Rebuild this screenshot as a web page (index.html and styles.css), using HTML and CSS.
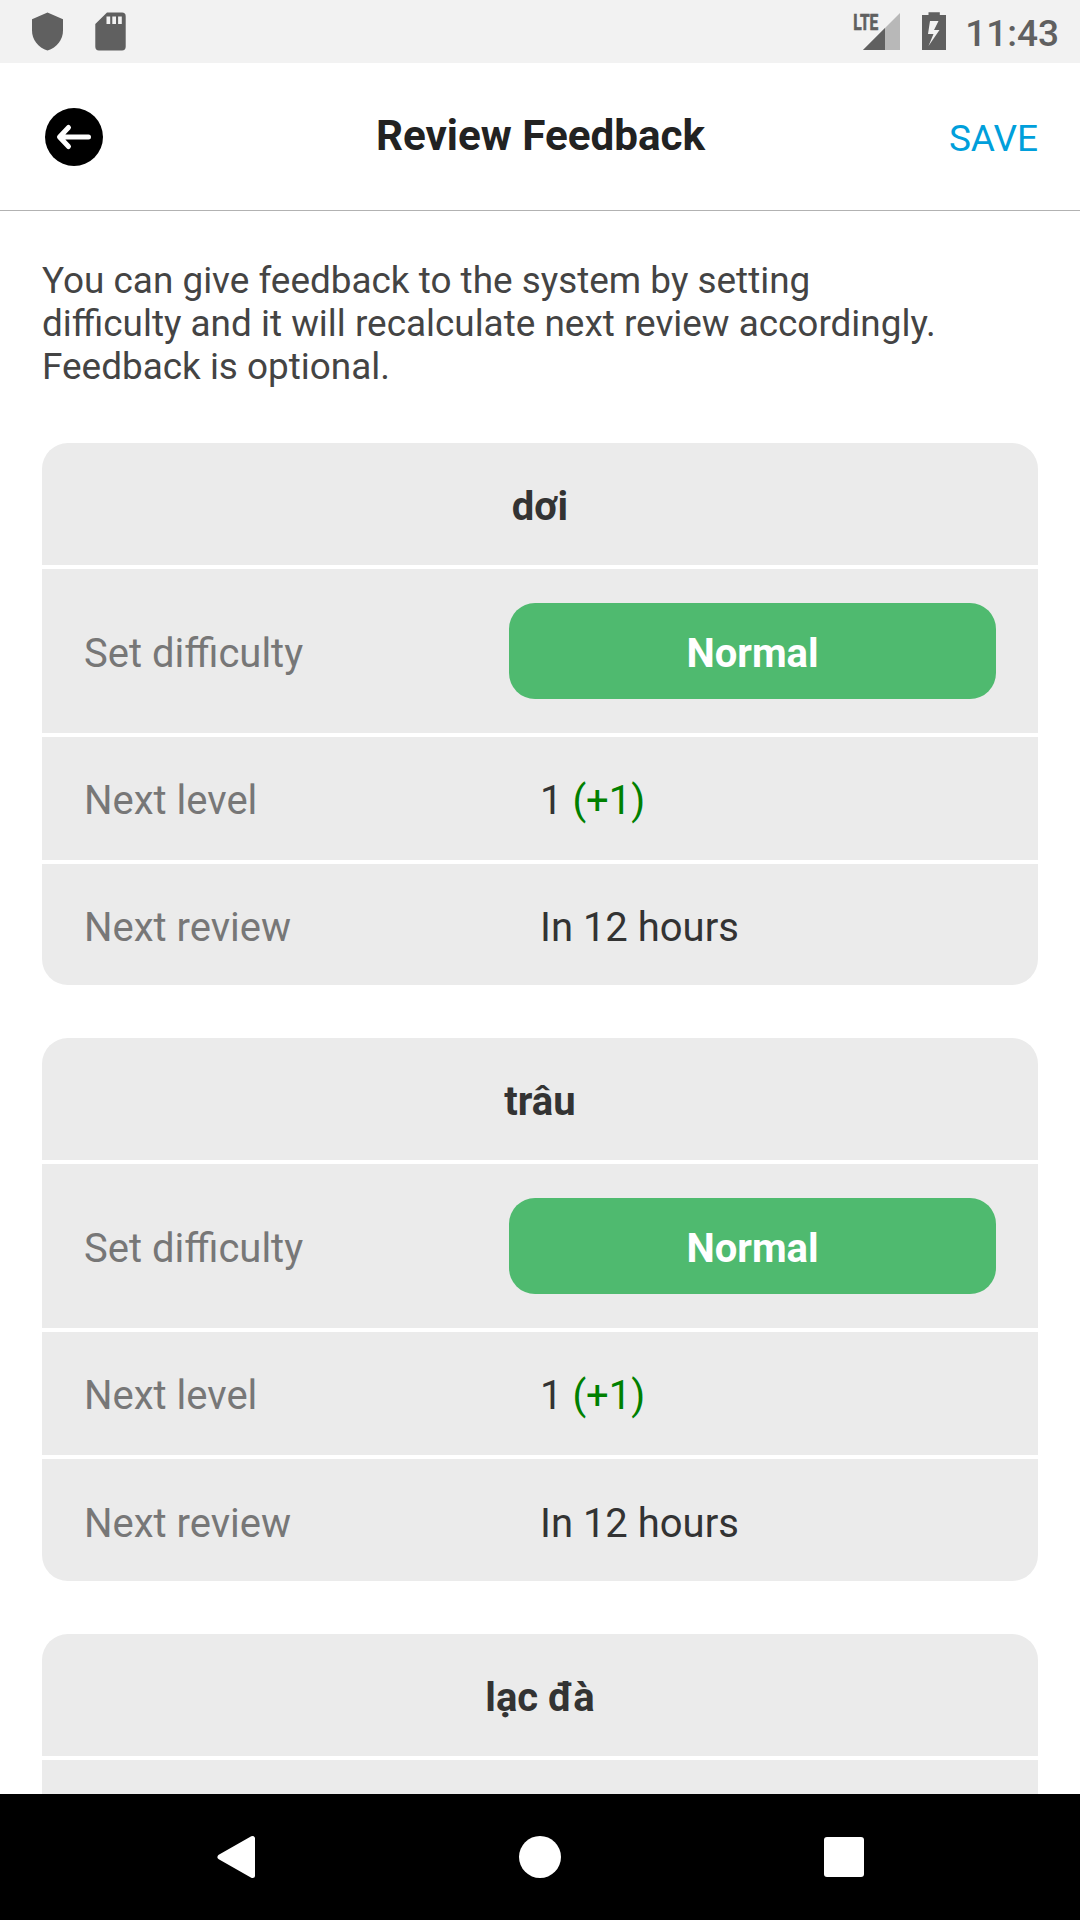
FILE: index.html
```html
<!DOCTYPE html>
<html lang="en">
<head>
<meta charset="utf-8">
<title>Review Feedback</title>
<link rel="stylesheet" href="styles.css">
</head>
<body>
<div class="screen">
  <div class="status-bar">
    <svg class="status-icons" width="180" height="63" viewBox="0 0 180 63">
      <path fill="#606060" d="M47.500 12.500L63 19.300V30.500C63 39.500 57 47.500 47.500 50.500C38 47.500 32 39.500 32 30.500V19.300Z"/>
      <path fill="#606060" fill-rule="evenodd" d="M107 12.500H122Q125.700 12.500 125.700 16.200V46.700Q125.700 50.400 122 50.400H99Q95.300 50.400 95.300 46.700V24ZM106.500 16.500V24H110.200V16.500ZM112.300 16.500V24H116V16.500ZM118.100 16.500V24H121.800V16.500Z"/>
    </svg>
    <svg class="status-icons" width="110" height="63" viewBox="850 0 110 63">
      <path fill="#b8b8b8" d="M900 13V50H863Z"/>
      <path fill="#606060" d="M885 28V50H863Z"/>
      <text class="network" x="853.300" y="29.800" textLength="25" lengthAdjust="spacingAndGlyphs">LTE</text>
      <path fill="#606060" fill-rule="evenodd" d="M928.500 12.200H939.800V15H946V50H922V15H928.500ZM930 21L928 34H933.500L928.500 46L939.500 30H934L938.500 21Z"/>
    </svg>
    <span class="clock">11:43</span>
  </div>
  <header class="header">
    <button class="back" aria-label="Back">
      <svg width="58" height="58" viewBox="0 0 58 58">
        <circle cx="29" cy="29" r="29"/>
        <path d="M43.500 29H15M23.500 19.500L14.500 29L23.500 38.500" fill="none" stroke="#fff" stroke-width="5" stroke-linecap="round" stroke-linejoin="round"/>
      </svg>
    </button>
    <h1 class="title">Review Feedback</h1>
    <button class="save">SAVE</button>
  </header>
  <main class="content">
    <p class="intro">You can give feedback to the system by setting<br>difficulty and it will recalculate next review accordingly.<br>Feedback is optional.</p>
    <section class="card">
      <h2 class="row word">dơi</h2>
      <div class="row difficulty"><span class="label">Set difficulty</span><button class="choice">Normal</button></div>
      <div class="row"><span class="label">Next level</span><span class="value">1 <span class="gain">(+1)</span></span></div>
      <div class="row last"><span class="label">Next review</span><span class="value">In 12 hours</span></div>
    </section>
    <section class="card">
      <h2 class="row word">trâu</h2>
      <div class="row difficulty"><span class="label">Set difficulty</span><button class="choice">Normal</button></div>
      <div class="row"><span class="label">Next level</span><span class="value">1 <span class="gain">(+1)</span></span></div>
      <div class="row last"><span class="label">Next review</span><span class="value">In 12 hours</span></div>
    </section>
    <section class="card">
      <h2 class="row word">lạc đà</h2>
      <div class="row difficulty"></div>
    </section>
  </main>
  <nav class="nav-bar">
    <svg width="1080" height="126" viewBox="0 0 1080 126">
      <path fill="#fff" stroke="#fff" stroke-width="5" stroke-linejoin="round" d="M252.500 44.500V81.500L220 63Z"/>
      <circle fill="#fff" cx="540" cy="63" r="21"/>
      <rect fill="#fff" x="824" y="43" width="40" height="40" rx="3"/>
    </svg>
  </nav>
</div>
</body>
</html>
```
FILE: styles.css
```css
* { box-sizing: border-box; }

body {
  margin: 0;
  font-family: Roboto, "Noto Sans", sans-serif;
  background: #fff;
}

button {
  border: 0;
  padding: 0;
  background: none;
  font: inherit;
}

.screen {
  width: 1080px;
  height: 1920px;
  display: flex;
  flex-direction: column;
  overflow: hidden;
}

.status-bar {
  flex: none;
  height: 63px;
  padding-right: 21px;
  display: flex;
  align-items: center;
  background: #f2f2f2;
  color: #606060;
}

.status-icons { display: block; flex: none; }
.status-icons + .status-icons { margin-left: auto; }

.network {
  font-size: 22.500px;
  font-weight: 700;
  fill: #606060;
  stroke: #606060;
  stroke-width: 0.7px;
}

.clock {
  width: 99px;
  padding-top: 4px;
  text-align: right;
  font-size: 37px;
  line-height: 44px;
  font-weight: 500;
}

.header {
  flex: none;
  height: 148px;
  padding: 0 42px 0 45px;
  display: grid;
  grid-template-columns: 200px 1fr 202px;
  align-items: center;
  border-bottom: 1px solid #b2b2b2;
}

.back { width: 58px; height: 58px; }
.back svg { display: block; }

.title {
  margin: 0;
  padding-bottom: 1px;
  text-align: center;
  font-size: 42.200px;
  line-height: 50px;
  color: #222;
}

.save {
  justify-self: end;
  padding-top: 5px;
  font-size: 37px;
  line-height: 44px;
  color: #009fdb;
}

.content {
  flex: 1;
  min-height: 0;
  overflow: hidden;
  padding: 48px 42px 0;
}

.intro {
  margin: 0 0 55px;
  font-size: 36.900px;
  line-height: 43px;
  color: #444;
}

.card {
  margin-bottom: 53.200px;
  display: flex;
  flex-direction: column;
  gap: 4px;
  border-radius: 26px;
  overflow: hidden;
}

.row {
  height: 123px;
  padding: 4px 42px 0;
  display: flex;
  align-items: center;
  font-size: 40px;
  line-height: 48px;
  background: #ebebeb;
}

.word {
  height: 122px;
  margin: 0;
  padding-top: 6px;
  justify-content: center;
  color: #333;
}

.difficulty { height: 164px; padding-top: 0; }
.last { height: 121.250px; padding-top: 7px; }

.label { width: 456px; color: #777; }
.value { color: #333; }
.gain { color: #008000; }

.difficulty .label { width: 425px; padding-top: 5px; }

.choice {
  flex: 1;
  height: 96px;
  padding-top: 6px;
  border-radius: 26px;
  background: #4fba6f;
  color: #fff;
  font-size: 40px;
  font-weight: 700;
}

.nav-bar {
  flex: none;
  height: 126px;
  background: #000;
}

.nav-bar svg { display: block; }
```
